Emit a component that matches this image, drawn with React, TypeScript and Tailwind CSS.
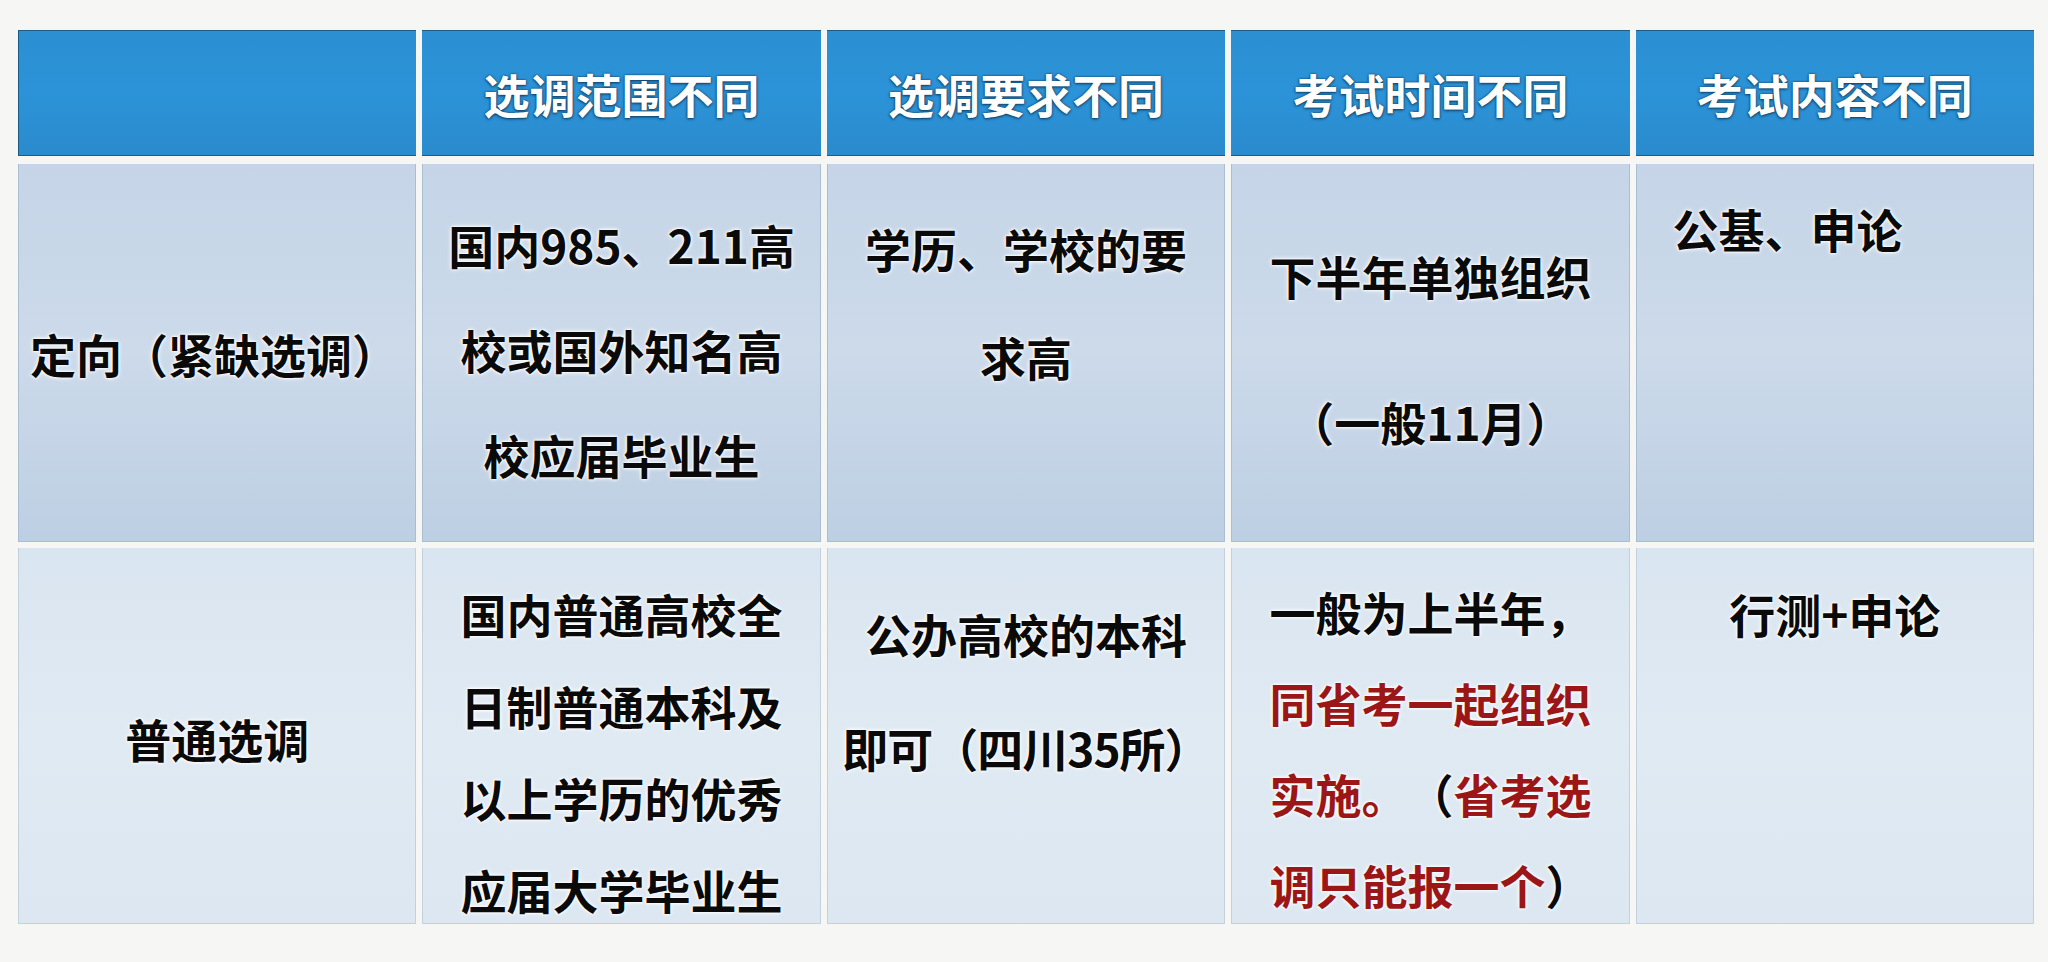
import React from "react";

/* ================================================================
   Shared styles
   ================================================================ */

const halo = "[text-shadow:0_0_2px_#fff,0_0_3px_#fff,0_0_5px_#fff]";
const red = "text-[#9b1717]";

function Lines({
  lines,
  className,
}: {
  lines: React.ReactNode[];
  className: string;
}) {
  return (
    <div className={`flex flex-col ${className}`}>
      {lines.map((l, i) => (
        <div key={i} className="h-[46px] leading-[46px] whitespace-nowrap">
          {l}
        </div>
      ))}
    </div>
  );
}

function HeadCell({ label, first }: { label?: string; first?: boolean }) {
  return (
    <div
      className={`flex h-[126px] items-center justify-center border-y border-[#1d5a84] bg-linear-to-b from-[#2b8fd2] via-[#2c93d8] to-[#2a8bcd] ${
        first ? "border-l" : ""
      }`}
    >
      {label && (
        <span className="text-[46px] font-bold leading-[46px] text-white [text-shadow:0_0_2px_#0d3d60,0_1px_3px_#0d3d60]">
          {label}
        </span>
      )}
    </div>
  );
}

function BodyCell({
  children,
  tone,
  className = "",
}: {
  children: React.ReactNode;
  tone: "a" | "b";
  className?: string;
}) {
  return (
    <div
      className={`flex h-full flex-col border-x border-b ${
        tone === "a"
          ? "border-[#aabdd1] bg-linear-to-b from-[#c5d5e7] via-[#ccdaea] to-[#bdcfe3]"
          : "border-[#c3d1de] bg-linear-to-b from-[#d9e5f0] via-[#e0eaf3] to-[#dce7f1]"
      } ${className}`}
    >
      {children}
    </div>
  );
}

/* ================================================================
   Table
   ================================================================ */

export default function App() {
  return (
    <div className="min-h-[962px] w-[2048px] bg-[#f6f6f4] px-[18px] pt-[30px] font-['Noto_Sans_CJK_SC','Noto_Sans',sans-serif] text-[46px] font-bold text-[#0a0a0a] [text-spacing-trim:space-all]">
      <div className="w-[2016px]">
        {/* header row */}
        <div className="grid grid-cols-5 gap-x-[6px]">
          <HeadCell first />
          <HeadCell label="选调范围不同" />
          <HeadCell label="选调要求不同" />
          <HeadCell label="考试时间不同" />
          <HeadCell label="考试内容不同" />
        </div>

        {/* 定向 */}
        <div className={`mt-[8px] grid h-[378px] grid-cols-5 gap-x-[6px] ${halo}`}>
          <BodyCell tone="a" className="justify-center pl-[11px]">
            <Lines lines={["定向（紧缺选调）"]} className="" />
          </BodyCell>
          <BodyCell tone="a" className="items-center">
            <Lines
              lines={["国内985、211高", "校或国外知名高", "校应届毕业生"]}
              className="items-center gap-[59px] pt-[57px]"
            />
          </BodyCell>
          <BodyCell tone="a" className="items-center">
            <Lines
              lines={["学历、学校的要", "求高"]}
              className="items-center gap-[62px] pt-[61px]"
            />
          </BodyCell>
          <BodyCell tone="a" className="items-center">
            <Lines
              lines={["下半年单独组织", "（一般11月）"]}
              className="items-center gap-[100px] pt-[88px]"
            />
          </BodyCell>
          <BodyCell tone="a" className="pl-[36px]">
            <Lines lines={["公基、申论"]} className="pt-[41px]" />
          </BodyCell>
        </div>

        {/* 普通选调 */}
        <div className={`mt-[6px] grid h-[376px] grid-cols-5 gap-x-[6px] ${halo}`}>
          <BodyCell tone="b" className="items-center justify-center">
            <Lines lines={["普通选调"]} className="pt-[4px]" />
          </BodyCell>
          <BodyCell tone="b" className="items-center">
            <Lines
              lines={[
                "国内普通高校全",
                "日制普通本科及",
                "以上学历的优秀",
                "应届大学毕业生",
              ]}
              className="items-center gap-[46px] pt-[42px]"
            />
          </BodyCell>
          <BodyCell tone="b" className="items-center">
            <Lines
              lines={[
                "公办高校的本科",
                <span className="tracking-[-1px]">即可（四川35所）</span>,
              ]}
              className="items-center gap-[68px] pt-[62px]"
            />
          </BodyCell>
          <BodyCell tone="b" className="items-center">
            <Lines
              lines={[
                "一般为上半年，",
                <span className={red}>同省考一起组织</span>,
                <>
                  <span className={red}>实施。</span>（
                  <span className={red}>省考选</span>
                </>,
                <>
                  <span className={red}>调只能报一个</span>）
                </>,
              ]}
              className="gap-[45px] pt-[40px]"
            />
          </BodyCell>
          <BodyCell tone="b" className="items-center">
            <Lines lines={["行测+申论"]} className="pt-[42px]" />
          </BodyCell>
        </div>
      </div>
    </div>
  );
}
